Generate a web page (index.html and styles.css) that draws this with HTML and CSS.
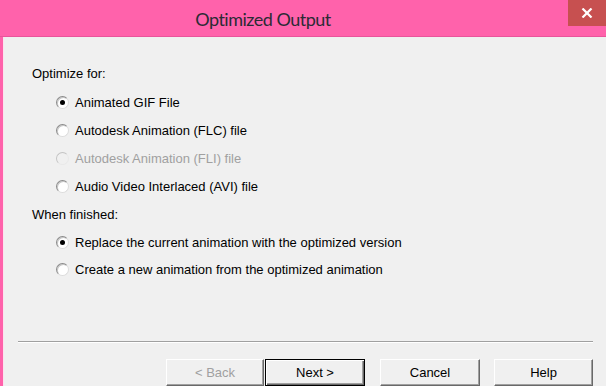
FILE: index.html
```html
<!DOCTYPE html>
<html>
<head>
    <title>Optimized Output</title>
    <link rel="stylesheet" href="styles.css">
</head>

<body>
    <div class="window">
        <div class="titlebar">
            <span class="title">Optimized Output</span>
            <span class="close-btn">
                <svg width="12" height="10" viewBox="0 0 12 10">
                    <path d="M1.5 0.5 L10.5 9.5 M10.5 0.5 L1.5 9.5" stroke="#fff" stroke-width="2.2"/>
                </svg>
            </span>
        </div>

        <div class="client">
            <div class="options">
                <div class="group">
                    <div class="group-label">Optimize for:</div>
                    <div class="radio-row"><span class="radio checked"></span>Animated GIF File</div>
                    <div class="radio-row"><span class="radio"></span>Autodesk Animation (FLC) file</div>
                    <div class="radio-row disabled"><span class="radio"></span>Autodesk Animation (FLI) file</div>
                    <div class="radio-row"><span class="radio"></span>Audio Video Interlaced (AVI) file</div>
                </div>

                <div class="group group-finish">
                    <div class="group-label">When finished:</div>
                    <div class="radio-row short"><span class="radio checked"></span>Replace the current animation with the optimized version</div>
                    <div class="radio-row short"><span class="radio"></span>Create a new animation from the optimized animation</div>
                </div>
            </div>

            <div class="separator"></div>

            <div class="button-row">
                <button class="btn btn-back" disabled>&lt; Back</button>
                <button class="btn btn-default">Next &gt;</button>
                <button class="btn btn-cancel">Cancel</button>
                <button class="btn btn-help">Help</button>
            </div>
        </div>
    </div>
</body>
</html>
```

FILE: styles.css
```css
/* General Styles */
body {
    margin: 0;
    font-family: "Liberation Sans", Arial, sans-serif;
    font-size: 13px;
    color: #000;
    background-color: #ff62ab;
    overflow: hidden;
}

.window {
    width: 606px;
    height: 386px;
    display: flex;
    flex-direction: column;
}

/* Title Bar */
.titlebar {
    height: 36px;
    flex-shrink: 0;
    display: flex;
    align-items: center;
    justify-content: center;
    position: relative;
    background-color: #ff62ab;
    border-bottom: 1px solid #e8559b;
    padding-right: 80px;
}

.title {
    font-family: Lato, "Noto Sans", sans-serif;
    font-size: 18px;
    letter-spacing: -0.5px;
    color: #2b2b35;
    margin-top: 1px;
}

.close-btn {
    position: absolute;
    top: 0;
    right: 0;
    width: 38px;
    height: 26px;
    background-color: #c75050;
    display: flex;
    align-items: center;
    justify-content: center;
}

/* Client Area */
.client {
    flex: 1;
    display: flex;
    flex-direction: column;
    background-color: #f0f0f0;
    margin-left: 3px;
    border-left: 1px solid #fbe3ee;
}

.options {
    flex: 1;
    padding: 23px 0 0 28px;
}

.group-label {
    height: 28px;
    line-height: 28px;
}

.group-finish {
    margin-top: 1px;
}

.radio-row {
    height: 28px;
    display: flex;
    align-items: center;
    padding-left: 24px;
}

.radio-row.short {
    height: 27px;
}

.radio-row.disabled {
    color: #a0a0a0;
}

/* Radio Styles */
.radio {
    width: 11px;
    height: 11px;
    border-radius: 50%;
    border: 1px solid #8a8a8a;
    border-right-color: #dcdcdc;
    border-bottom-color: #dcdcdc;
    background-color: #fff;
    box-shadow: inset 1px 1px 0 #c8c8c8;
    margin-right: 6px;
    display: flex;
    align-items: center;
    justify-content: center;
    flex-shrink: 0;
}

.radio.checked::after {
    content: "";
    width: 5px;
    height: 5px;
    border-radius: 50%;
    background-color: #000;
}

.disabled .radio {
    border-color: #c4c4c4;
    border-right-color: #e8e8e8;
    border-bottom-color: #e8e8e8;
    box-shadow: none;
    background-color: #f0f0f0;
}

.separator {
    margin: 0 13px 0 14px;
    border-top: 1px solid #a0a0a0;
    border-bottom: 1px solid #fff;
}

/* Button Styles */
.button-row {
    display: flex;
    justify-content: flex-end;
    padding: 16px 13px 0 0;
    height: 27px;
}

.btn {
    width: 100px;
    height: 27px;
    font-family: "Liberation Sans", Arial, sans-serif;
    font-size: 13px;
    color: #000;
    background-color: #f0f0f0;
    border: 1px solid #fff;
    border-right-color: #696969;
    border-bottom-color: #696969;
    box-shadow: inset -1px -1px 0 #a0a0a0;
    padding: 0 0 1px 0;
    margin: 0;
}

.btn-back {
    width: 98px;
    color: #a0a0a0;
}

.btn-default {
    border: 1px solid #000;
    box-shadow: inset 1px 1px 0 #fff, inset -1px -1px 0 #696969, inset -2px -2px 0 #a0a0a0;
    margin-left: 1px;
}

.btn-cancel {
    margin-left: 15px;
}

.btn-help {
    width: 99px;
    margin-left: 14px;
}
```
